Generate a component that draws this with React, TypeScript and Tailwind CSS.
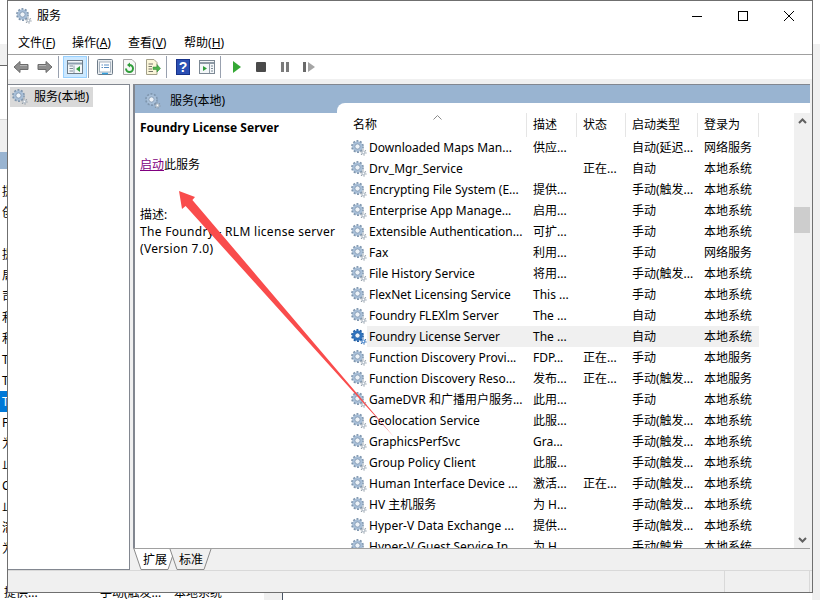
const rows = [
  ["Downloaded Maps Man...", "供应...", "", "自动(延迟...", "网络服务"],
  ["Drv_Mgr_Service", "", "正在...", "自动", "本地系统"],
  ["Encrypting File System (E...", "提供...", "", "手动(触发...", "本地系统"],
  ["Enterprise App Manage...", "启用...", "", "手动", "本地系统"],
  ["Extensible Authentication...", "可扩...", "", "手动", "本地系统"],
  ["Fax", "利用...", "", "手动", "网络服务"],
  ["File History Service", "将用...", "", "手动(触发...", "本地系统"],
  ["FlexNet Licensing Service", "This ...", "", "手动", "本地系统"],
  ["Foundry FLEXlm Server", "The ...", "", "自动", "本地系统"],
  ["Foundry License Server", "The ...", "", "自动", "本地系统"],
  ["Function Discovery Provi...", "FDP...", "正在...", "手动", "本地服务"],
  ["Function Discovery Reso...", "发布...", "正在...", "手动(触发...", "本地服务"],
  ["GameDVR 和广播用户服务...", "此用...", "", "手动", "本地系统"],
  ["Geolocation Service", "此服...", "", "手动(触发...", "本地系统"],
  ["GraphicsPerfSvc", "Gra...", "", "手动(触发...", "本地系统"],
  ["Group Policy Client", "此服...", "", "手动(触发...", "本地系统"],
  ["Human Interface Device ...", "激活...", "正在...", "手动(触发...", "本地系统"],
  ["HV 主机服务", "为 H...", "", "手动(触发...", "本地系统"],
  ["Hyper-V Data Exchange ...", "提供...", "", "手动(触发...", "本地系统"],
  ["Hyper-V Guest Service In...", "为 H...", "", "手动(触发...", "本地系统"],
]

const stripRows = ["提", "创", "", "提", "局", "司", "利", "利", "T", "T", "T", "F", "为", "止", "C", "止", "清", "为"]

const Gear = ({ dark = false }: { dark?: boolean }) => {
  const main = dark ? "#2f74c0" : "#a8bfd8"
  const edge = dark ? "#1f5ca3" : "#7f96ae"
  return (
    <svg width="16" height="16" viewBox="0 0 16 16" className="shrink-0">
      <circle cx="6.5" cy="6.5" r="5.2" fill={main} />
      <circle cx="6.5" cy="6.5" r="5.6" fill="none" stroke={edge} strokeWidth="1.6" strokeDasharray="2 1.52" />
      <circle cx="6.5" cy="6.5" r="2.6" fill="#eef3f8" stroke={edge} strokeWidth="0.8" />
      <circle cx="12.4" cy="12.4" r="2" fill={dark ? "#5b93d3" : "#b8c2cc"} />
      <circle cx="12.4" cy="12.4" r="2.6" fill="none" stroke={dark ? "#1f5ca3" : "#87939f"} strokeWidth="1.1" strokeDasharray="1.2 1.52" />
      <circle cx="12.4" cy="12.4" r="0.8" fill="#fff" />
    </svg>
  )
}

const ArrowIcon = ({ flip = false }: { flip?: boolean }) => (
  <svg width="16" height="14" viewBox="0 0 16 14" className={flip ? "-scale-x-100" : ""}>
    <path d="M1 7 7 1.5V4.5H15V9.5H7V12.5Z" fill="#8e8e8e" stroke="#6b6b6b" />
    <path d="M7 5.5H14" stroke="#b5b5b5" />
  </svg>
)

const TreeIcon = () => (
  <svg width="16" height="16" viewBox="0 0 16 16">
    <rect x="0.5" y="1.5" width="15" height="13" fill="#f4f7f9" stroke="#6d7b88" />
    <path d="M1 4.5H15" stroke="#8fa0b0" strokeWidth="2" />
    <path d="M2.5 7H6M2.5 9.500H6M2.5 12H6" stroke="#7d8b97" />
    <path d="M7 6.500V14" stroke="#8fa0b0" />
    <path d="M13 7V13L9 10Z" fill="#2f9e3a" />
  </svg>
)

const PropsIcon = () => (
  <svg width="16" height="16" viewBox="0 0 16 16">
    <rect x="0.5" y="0.5" width="15" height="15" rx="1" fill="#e9edf0" stroke="#6d7b88" />
    <rect x="2.500" y="3" width="11" height="10" fill="#fff" stroke="#a9b4bf" />
    <path d="M4.500 6H6M7 6H12M4.500 8.500H6M7 8.500H12" stroke="#5a8fc4" />
    <path d="M5 14.500H11" stroke="#35a0dd" strokeWidth="1.500" />
  </svg>
)

const RefreshIcon = () => (
  <svg width="15" height="16" viewBox="0 0 15 16">
    <path d="M1.500.5H10L13.500 4V15.500H1.500Z" fill="#f7f7f7" stroke="#a5a5a5" />
    <path d="M4 9.500A3.500 3.500 0 1 0 7.500 6" fill="none" stroke="#2f9e3a" strokeWidth="2" />
    <path d="M8 3.500V8.500L5 6Z" fill="#2f9e3a" />
  </svg>
)

const ExportIcon = () => (
  <svg width="16" height="16" viewBox="0 0 16 16">
    <path d="M1.500.5H9L12 3.500V15.500H1.500Z" fill="#fbf6d9" stroke="#a3a08a" />
    <path d="M3.500 5H8M3.500 7.500H7M3.500 10H7M3.500 12.500H8" stroke="#77756a" />
    <path d="M8 8H12V5.500L15.500 9.500L12 13V10.500H8Z" fill="#4db34d" stroke="#2f8a35" strokeWidth="0.500" />
  </svg>
)

const HelpIcon = () => (
  <svg width="14" height="16" viewBox="0 0 14 16">
    <rect x="0" y="0" width="14" height="16" fill="#2b4fb3" />
    <rect x="0.500" y="0.500" width="13" height="15" fill="none" stroke="#17328a" />
    <text x="7" y="13" textAnchor="middle" fontSize="14" fontWeight="700" fill="#fff" fontFamily="Liberation Sans">?</text>
  </svg>
)

const PanelIcon = () => (
  <svg width="16" height="16" viewBox="0 0 16 16">
    <rect x="0.500" y="1.500" width="15" height="13" fill="#f4f7f9" stroke="#7c8894" />
    <path d="M1 4H15" stroke="#8e9aa5" strokeWidth="2" />
    <path d="M10.500 5V14" stroke="#8e9aa5" />
    <path d="M4 7V12L8 9.500Z" fill="#2f9e3a" />
    <path d="M12 7H14M12 9.500H14M12 12H14" stroke="#7d8b97" />
  </svg>
)

const Separator = () => <div className="ml-px mr-1 h-5.5 w-px bg-gray-400" />

const ToolButton = ({ children, active = false }: { children: React.ReactNode; active?: boolean }) => (
  <div
    className={`flex h-5.5 w-6 items-center justify-center ${active ? "border border-[#99d1ff] bg-[#cce8ff]" : ""}`}
  >
    {children}
  </div>
)

const Toolbar = () => (
  <div className="flex h-6 items-center bg-white pl-px">
    <ToolButton><ArrowIcon /></ToolButton>
    <ToolButton><ArrowIcon flip /></ToolButton>
    <Separator />
    <ToolButton active><TreeIcon /></ToolButton>
    <Separator />
    <ToolButton><PropsIcon /></ToolButton>
    <ToolButton><RefreshIcon /></ToolButton>
    <ToolButton><ExportIcon /></ToolButton>
    <Separator />
    <ToolButton><HelpIcon /></ToolButton>
    <ToolButton><PanelIcon /></ToolButton>
    <Separator />
    <ToolButton>
      <svg width="8" height="12" viewBox="0 0 8 12"><path d="M0 0 8 6 0 12Z" fill="#35a835" /></svg>
    </ToolButton>
    <ToolButton>
      <svg width="10" height="10" viewBox="0 0 10 10"><rect width="10" height="10" rx="1" fill="#4a4a4a" /></svg>
    </ToolButton>
    <ToolButton>
      <svg width="8" height="10" viewBox="0 0 8 10"><path d="M0 0H3V10H0ZM5 0H8V10H5Z" fill="#7b7b7b" /></svg>
    </ToolButton>
    <ToolButton>
      <svg width="12" height="10" viewBox="0 0 12 10"><path d="M0 0H3V10H0Z" fill="#6a6a6a" /><path d="M5 0 12 5 5 10Z" fill="#a5a5a5" /></svg>
    </ToolButton>
  </div>
)

const Menu = ({ label, mnemonic, first = false }: { label: string; mnemonic: string; first?: boolean }) => (
  <span className={`whitespace-nowrap ${first ? "w-9.5" : "w-10"}`}>
    {label}(<span className="underline">{mnemonic}</span>)
  </span>
)

const TabShape = ({ active }: { active: boolean }) => (
  <svg width="44" height="21" viewBox="0 0 44 21" className="absolute left-0 top-0">
    <path
      d="M1 0 8 20.500H35L42 0"
      fill={active ? "#fff" : "#f0f0f0"}
      stroke="#8a8a8a"
    />
  </svg>
)

const Tab = ({ label, active = false }: { label: string; active?: boolean }) => (
  <div className="relative -mr-2 flex h-5.25 w-11 items-center justify-center pt-px">
    <TabShape active={active} />
    <span className="relative">{label}</span>
  </div>
)

const columns = "grid grid-cols-[190px_50px_49px_72px_61px]"

const ServiceList = () => (
  <div className="flex min-w-0 flex-1 flex-col overflow-hidden">
    <div className={`${columns} h-6 shrink-0`}>
      {["名称", "描述", "状态", "启动类型", "登录为"].map((h, i) => (
        <div
          key={h}
          className={`relative flex items-center border-r border-[#e5e5e5] ${i === 0 ? "pl-4" : "pl-1.5"}`}
        >
          {h}
          {i === 0 && (
            <svg width="9" height="5" viewBox="0 0 9 5" className="absolute left-24 top-0.5">
              <path d="M.5 4.500 4.500.5 8.500 4.500" fill="none" stroke="#8a8a8a" />
            </svg>
          )}
        </div>
      ))}
    </div>
    {rows.map((r, idx) => (
      <div key={r[0]} className={`${columns} h-5.25 shrink-0 items-center`}>
        <div className="flex h-full items-center pl-3.5">
          <Gear dark={idx === 9} />
          <div className={`flex h-full flex-1 items-center whitespace-nowrap pl-0.5 ${idx === 9 ? "bg-[#f0f0f0]" : ""}`}>
            {r[0]}
          </div>
        </div>
        {r.slice(1).map((c, i) => (
          <div
            key={i}
            className={`flex h-full items-center whitespace-nowrap pl-1.5 ${idx === 9 ? "bg-[#f0f0f0]" : ""}`}
          >
            {c}
          </div>
        ))}
      </div>
    ))}
  </div>
)

const Scrollbar = () => (
  <div className="flex w-4 shrink-0 flex-col bg-[#f0f0f0]">
    <div className="flex h-4 items-center justify-center">
      <svg width="9" height="6" viewBox="0 0 9 6"><path d="M1 5 4.500 1.500 8 5" fill="none" stroke="#606060" strokeWidth="2" /></svg>
    </div>
    <div className="mt-19.5 h-6.5 bg-[#cdcdcd]" />
    <div className="mt-auto flex h-4 items-center justify-center">
      <svg width="9" height="6" viewBox="0 0 9 6"><path d="M1 1 4.500 4.500 8 1" fill="none" stroke="#606060" strokeWidth="2" /></svg>
    </div>
  </div>
)

const Window = () => (
  <div className="absolute left-[7px] top-0 flex h-[593px] w-[806px] flex-col border border-[#6f6f6f] bg-white text-xs text-black">
    <div className="flex h-7.5 shrink-0 items-center">
      <div className="ml-2 flex items-center gap-1.25">
        <Gear />
        <span>服务</span>
      </div>
      <div className="ml-auto flex">
        <div className="flex h-7 w-11.5 items-center justify-center">
          <svg width="10" height="10" viewBox="0 0 10 10"><path d="M0 5.500H10" stroke="#000" /></svg>
        </div>
        <div className="flex h-7 w-11.5 items-center justify-center">
          <svg width="10" height="10" viewBox="0 0 10 10"><rect x="0.500" y="0.500" width="9" height="9" fill="none" stroke="#000" /></svg>
        </div>
        <div className="flex h-7 w-11.5 items-center justify-center">
          <svg width="10" height="10" viewBox="0 0 10 10"><path d="M0 0 10 10M10 0 0 10" stroke="#000" /></svg>
        </div>
      </div>
    </div>
    <div className="flex h-6 shrink-0 items-center gap-4 border-b border-[#a0a0a0] pl-2.5">
      <Menu label="文件" mnemonic="F" first />
      <Menu label="操作" mnemonic="A" />
      <Menu label="查看" mnemonic="V" />
      <Menu label="帮助" mnemonic="H" />
    </div>
    <Toolbar />
    <div className="flex min-h-0 flex-1 flex-col bg-[#f0f0f0] pt-1.25">
      <div className="flex min-h-0 flex-1 pr-0.5">
        <div className="w-[122px] shrink-0 border border-l-0 border-[#828790] bg-white p-0.5">
          <div className="flex h-5 w-[83px] items-center gap-1.5 bg-[#d9d9d9] pl-0.5">
            <Gear />
            <span>服务(本地)</span>
          </div>
        </div>
        <div className="ml-0.75 flex min-w-0 flex-1 flex-col">
          <div className="flex min-h-0 flex-1 border-l-2 border-t border-[#828790] bg-white">
            <div className="flex w-[202px] shrink-0 flex-col">
              <div className="flex h-7 items-center gap-2.25 bg-[#99b4d1] pl-2.5 pt-1">
                <Gear />
                <span>服务(本地)</span>
              </div>
              <div className="pl-1.25 pt-1 leading-4.25">
                <div className="flex h-5 items-center font-bold">Foundry License Server</div>
                <div className="mt-4.75">
                  <span className="text-[#800080] underline">启动</span>此服务
                </div>
                <div className="mt-8.25">描述:</div>
                <div className="tracking-wide whitespace-nowrap">The Foundry - RLM license server</div>
                <div className="tracking-wide">(Version 7.0)</div>
              </div>
            </div>
            <div className="flex min-w-0 flex-1 flex-col bg-[#99b4d1]">
              <div className="mt-4.5 flex min-h-0 flex-1 rounded-tl-lg bg-white pt-2.5">
                <ServiceList />
                <Scrollbar />
              </div>
            </div>
          </div>
          <div className="h-px shrink-0 bg-[#a0a0a0]" />
          <div className="flex h-5.25 shrink-0">
            <Tab label="扩展" active />
            <Tab label="标准" />
          </div>
        </div>
      </div>
      <div className="flex h-5.5 shrink-0 justify-end border-t border-[#d9d9d9] pr-0.5">
        <div className="w-[86px] border-x border-[#d9d9d9]" />
      </div>
    </div>
  </div>
)

const Behind = () => (
  <div className="absolute inset-0 bg-white text-xs text-black">
    <div className="flex w-2 flex-col overflow-hidden">
      <div className="h-11" />
      <div className="h-5.5 border-b border-[#666666] bg-[#f0f0f0]" />
      <div className="h-13.5 border-b border-[#d9d9d9]" />
      <div className="h-8 bg-[#f0f0f0]" />
      <div className="h-4.25 bg-[#99b4d1]" />
      <div className="h-3" />
      {stripRows.map((s, i) => (
        <div key={i} className={`flex h-5.25 items-center pl-0.5 whitespace-nowrap ${s === "T" && i === 10 ? "bg-[#0078d7] text-white" : ""}`}>
          {s}
        </div>
      ))}
    </div>
    <div className="absolute left-0 top-[586px] flex h-3.5 w-full items-center">
      <span className="ml-1 w-24">提供...</span>
      <span className="w-[74px]">手动(触发...</span>
      <span className="w-[90px]">本地系统</span>
      <div className="h-full w-4.5 bg-[#f0f0f0]" />
      <div className="h-full w-px bg-gray-600" />
    </div>
    <div className="absolute right-0 top-11 bottom-0 w-2 bg-[#f0f0f0]" />
  </div>
)

export default function App() {
  return (
    <div className="relative h-[600px] w-[820px] overflow-hidden font-['Noto_Sans','Noto_Sans_CJK_SC',sans-serif]">
      <Behind />
      <Window />
      <svg width="820" height="600" viewBox="0 0 820 600" className="pointer-events-none absolute left-0 top-0">
        <polygon
          points="179,191 195,197 192.400,200 394,437 185.600,206 182,209"
          fill="#f94c4c"
        />
      </svg>
    </div>
  )
}
